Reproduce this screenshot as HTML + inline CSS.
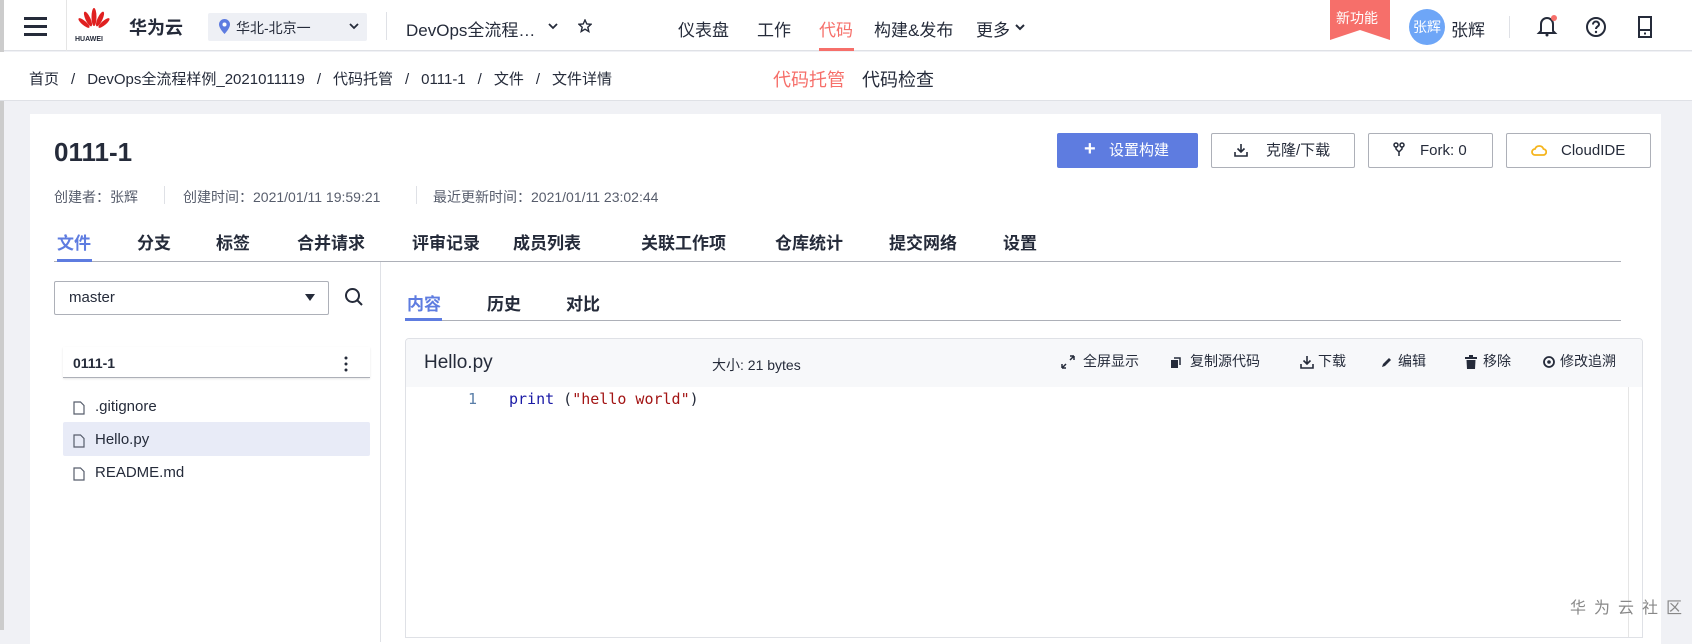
<!DOCTYPE html>
<html><head><meta charset="utf-8"><style>
*{margin:0;padding:0;box-sizing:border-box}
body{width:1692px;height:630px;overflow:hidden;background:#f0f1f5;font-family:"Liberation Sans","Noto Sans CJK SC",sans-serif;color:#252b3a;position:relative}
.a{position:absolute;white-space:nowrap}
svg{position:absolute}
.sep{margin:0 12px}
</style></head><body>
<!-- header -->
<div class="a" style="left:0;top:0;width:1692px;height:51px;background:#fff;border-bottom:1px solid #dfe1e6"></div>
<div class="a" style="left:0;top:0;width:4px;height:630px;background:#ccc"></div>
<div class="a" style="left:24px;top:17px;width:23px;height:3px;background:#252b3a;box-shadow:0 8px 0 #252b3a,0 16px 0 #252b3a"></div>
<div class="a" style="left:66px;top:0;width:1px;height:51px;background:#e5e5e5"></div>
<svg style="left:78px;top:8px" width="32" height="26" viewBox="0 0 32 26"><g fill="#e02020"><ellipse cx="16" cy="9" rx="2.5" ry="9"/><ellipse cx="10" cy="11" rx="2.5" ry="8" transform="rotate(-25 10 11)"/><ellipse cx="22" cy="11" rx="2.5" ry="8" transform="rotate(25 22 11)"/><ellipse cx="6" cy="15" rx="2.2" ry="7" transform="rotate(-50 6 15)"/><ellipse cx="26" cy="15" rx="2.2" ry="7" transform="rotate(50 26 15)"/></g></svg>
<div class="a" style="left:75px;top:36px;font-size:7px;font-weight:bold">HUAWEI</div>
<div class="a" style="left:129px;top:14px;font-size:18px;font-weight:bold">华为云</div>
<div class="a" style="left:208px;top:13px;width:159px;height:28px;background:#eef0f5;border-radius:2px"></div>
<svg style="left:219px;top:19px" width="11" height="15" viewBox="0 0 11 15"><path d="M5.5 0C2.5 0 0 2.4 0 5.4 0 9.5 5.5 15 5.5 15S11 9.5 11 5.4C11 2.4 8.5 0 5.5 0z" fill="#5e7ce0"/><circle cx="5.5" cy="5.5" r="2" fill="#fff"/></svg>
<div class="a" style="left:236px;top:18px;font-size:14px">华北-北京一</div>
<svg style="left:349px;top:23px" width="10" height="7" viewBox="0 0 10 7"><path d="M1 1L5 5 9 1" fill="none" stroke="#252b3a" stroke-width="1.8"/></svg>
<div class="a" style="left:386px;top:12px;width:1px;height:28px;background:#dfe1e6"></div>
<div class="a" style="left:406px;top:16px;font-size:17px">DevOps全流程…</div>
<svg style="left:548px;top:23px" width="10" height="7" viewBox="0 0 10 7"><path d="M1 1L5 5 9 1" fill="none" stroke="#252b3a" stroke-width="1.8"/></svg>
<svg style="left:578px;top:19px" width="14" height="14" viewBox="0 0 14 14"><path d="M7 1L8.8 5 13 5.3 9.8 8.2 10.8 12.5 7 10.2 3.2 12.5 4.2 8.2 1 5.3 5.2 5Z" fill="none" stroke="#252b3a" stroke-width="1.4"/></svg>
<div class="a" style="left:678px;top:16px;font-size:17px">仪表盘</div>
<div class="a" style="left:757px;top:16px;font-size:17px">工作</div>
<div class="a" style="left:819px;top:16px;font-size:17px;color:#f66f6a">代码</div>
<div class="a" style="left:819px;top:48px;width:35px;height:3px;background:#f66f6a"></div>
<div class="a" style="left:874px;top:16px;font-size:17px">构建&amp;发布</div>
<div class="a" style="left:976px;top:16px;font-size:17px">更多</div>
<svg style="left:1015px;top:24px" width="10" height="7" viewBox="0 0 10 7"><path d="M1 1L5 5 9 1" fill="none" stroke="#252b3a" stroke-width="2"/></svg>
<svg style="left:1330px;top:0" width="60" height="40" viewBox="0 0 60 40"><path d="M0 0H60V40L30 30 0 40Z" fill="#f66f6a"/></svg>
<div class="a" style="left:1336px;top:8px;font-size:14px;color:#fff">新功能</div>
<div class="a" style="left:1409px;top:9px;width:36px;height:36px;border-radius:50%;background:#6ea6f7;color:#fff;font-size:14px;line-height:36px;text-align:center">张辉</div>
<div class="a" style="left:1451px;top:16px;font-size:17px">张辉</div>
<div class="a" style="left:1509px;top:16px;width:1px;height:22px;background:#dfe1e6"></div>
<svg style="left:1536px;top:14px" width="22" height="24" viewBox="0 0 22 24"><path d="M5 17V10a6 6 0 0112 0v7l2 2H3z" fill="none" stroke="#252b3a" stroke-width="2"/><circle cx="11" cy="21" r="1.5" fill="#252b3a"/><circle cx="18" cy="4" r="3" fill="#f66f6a"/></svg>
<svg style="left:1585px;top:16px" width="22" height="22" viewBox="0 0 22 22"><circle cx="11" cy="11" r="9" fill="none" stroke="#252b3a" stroke-width="2"/><path d="M8 8.5a3 3 0 116 0c0 2-3 2-3 4.5" fill="none" stroke="#252b3a" stroke-width="2"/><circle cx="11" cy="16" r="1.2" fill="#252b3a"/></svg>
<svg style="left:1637px;top:15px" width="16" height="24" viewBox="0 0 16 24"><rect x="2" y="2" width="12" height="20" fill="none" stroke="#252b3a" stroke-width="2"/><path d="M2 15H14" stroke="#252b3a" stroke-width="2"/><rect x="7" y="17.5" width="2" height="2" fill="#252b3a"/></svg>
<!-- breadcrumb bar -->
<div class="a" style="left:0;top:52px;width:1692px;height:49px;background:#fff;border-bottom:1px solid #dfe1e6"></div>
<div class="a" style="left:29px;top:68px;font-size:15px">首页<span class="sep">/</span>DevOps全流程样例_2021011119<span class="sep">/</span>代码托管<span class="sep">/</span>0111-1<span class="sep">/</span>文件<span class="sep">/</span>文件详情</div>
<div class="a" style="left:773px;top:66px;font-size:18px;color:#f66f6a">代码托管</div>
<div class="a" style="left:862px;top:66px;font-size:18px">代码检查</div>
<!-- card -->
<div class="a" style="left:30px;top:114px;width:1631px;height:530px;background:#fff"></div>
<div class="a" style="left:54px;top:137px;font-size:26px;font-weight:bold">0111-1</div>
<div class="a" style="left:1057px;top:133px;width:141px;height:35px;background:#5e7ce0;border-radius:2px;color:#fff;font-size:15px;line-height:35px;padding-left:28px"><b style="font-size:20px;position:absolute;left:27px;top:-1px">+</b><span style="margin-left:24px">设置构建</span></div>
<div class="a" style="left:1211px;top:133px;width:144px;height:35px;border:1px solid #adb0b8;border-radius:2px;font-size:15px;line-height:33px;padding-left:54px">克隆/下载</div>
<svg style="left:1234px;top:143px" width="14" height="14" viewBox="0 0 14 14"><path d="M7 1V9M3.5 5.5L7 9 10.5 5.5M1 9V13H13V9" fill="none" stroke="#252b3a" stroke-width="1.6"/></svg>
<div class="a" style="left:1368px;top:133px;width:125px;height:35px;border:1px solid #adb0b8;border-radius:2px;font-size:15px;line-height:33px;padding-left:51px">Fork: 0</div>
<svg style="left:1393px;top:142px" width="12" height="16" viewBox="0 0 12 16"><circle cx="3" cy="3" r="2" fill="none" stroke="#252b3a" stroke-width="1.5"/><circle cx="9" cy="3" r="2" fill="none" stroke="#252b3a" stroke-width="1.5"/><path d="M3 5V7L6 10 9 7V5M6 10V14" fill="none" stroke="#252b3a" stroke-width="1.5"/></svg>
<div class="a" style="left:1506px;top:133px;width:145px;height:35px;border:1px solid #adb0b8;border-radius:2px;font-size:15px;line-height:33px;padding-left:54px">CloudIDE</div>
<svg style="left:1531px;top:143px" width="16" height="14" viewBox="0 0 16 14"><path d="M4 12a3 3 0 010-6 4.5 4.5 0 018.5 0 3 3 0 01-.5 6z" fill="none" stroke="#f5b51e" stroke-width="1.8"/></svg>
<div class="a" style="left:54px;top:187px;font-size:14px;color:#575d6c">创建者：张辉</div>
<div class="a" style="left:164px;top:186px;width:1px;height:18px;background:#dfe1e6"></div>
<div class="a" style="left:183px;top:187px;font-size:14px;color:#575d6c">创建时间：2021/01/11 19:59:21</div>
<div class="a" style="left:416px;top:186px;width:1px;height:18px;background:#dfe1e6"></div>
<div class="a" style="left:433px;top:187px;font-size:14px;color:#575d6c">最近更新时间：2021/01/11 23:02:44</div>
<!-- tabs -->
<div class="a" style="top:229px;left:0;font-size:17px;font-weight:bold">
<span class="a" style="left:57px;color:#5e7ce0">文件</span><span class="a" style="left:137px">分支</span><span class="a" style="left:216px">标签</span><span class="a" style="left:297px">合并请求</span><span class="a" style="left:412px">评审记录</span><span class="a" style="left:513px">成员列表</span><span class="a" style="left:641px">关联工作项</span><span class="a" style="left:775px">仓库统计</span><span class="a" style="left:889px">提交网络</span><span class="a" style="left:1003px">设置</span></div>
<div class="a" style="left:54px;top:261px;width:1567px;height:1px;background:#adb0b8"></div>
<div class="a" style="left:57px;top:259px;width:35px;height:3px;background:#5e7ce0"></div>
<div class="a" style="left:380px;top:262px;width:1px;height:380px;background:#dfe1e6"></div>
<!-- left panel -->
<div class="a" style="left:54px;top:281px;width:275px;height:34px;border:1px solid #adb0b8;border-radius:2px;font-size:15px;line-height:32px;padding-left:14px">master</div>
<svg style="left:305px;top:294px" width="10" height="7" viewBox="0 0 10 7"><path d="M0 0H10L5 7Z" fill="#252b3a"/></svg>
<svg style="left:344px;top:287px" width="20" height="20" viewBox="0 0 20 20"><circle cx="8.5" cy="8.5" r="6.5" fill="none" stroke="#252b3a" stroke-width="2"/><path d="M13.5 13.5L18 18" stroke="#252b3a" stroke-width="2"/></svg>
<div class="a" style="left:63px;top:347px;width:307px;height:31px;border-bottom:1px solid #adb0b8;box-shadow:0 1px 2px rgba(0,0,0,.1)"></div>
<div class="a" style="left:73px;top:355px;font-size:14px;font-weight:bold">0111-1</div>
<svg style="left:344px;top:356px" width="4" height="16" viewBox="0 0 4 16"><circle cx="2" cy="2" r="1.5" fill="#252b3a"/><circle cx="2" cy="8" r="1.5" fill="#252b3a"/><circle cx="2" cy="14" r="1.5" fill="#252b3a"/></svg>
<div class="a" style="left:63px;top:422px;width:307px;height:34px;background:#e8ebf7;border-radius:2px"></div>
<div class="a" style="left:95px;top:398px;font-size:15px;color:#252b3a">.gitignore</div>
<div class="a" style="left:95px;top:431px;font-size:15px">Hello.py</div>
<div class="a" style="left:95px;top:464px;font-size:15px">README.md</div>
<svg style="left:73px;top:401px" width="12" height="14" viewBox="0 0 12 14"><path d="M1 1H7.5L11 4.5V13H1Z" fill="none" stroke="#575d6c" stroke-width="1.2"/></svg>
<svg style="left:73px;top:434px" width="12" height="14" viewBox="0 0 12 14"><path d="M1 1H7.5L11 4.5V13H1Z" fill="none" stroke="#575d6c" stroke-width="1.2"/></svg>
<svg style="left:73px;top:467px" width="12" height="14" viewBox="0 0 12 14"><path d="M1 1H7.5L11 4.5V13H1Z" fill="none" stroke="#575d6c" stroke-width="1.2"/></svg>
<!-- right tabs -->
<div class="a" style="left:407px;top:290px;font-size:17px;font-weight:bold;color:#5e7ce0">内容</div>
<div class="a" style="left:487px;top:290px;font-size:17px;font-weight:bold">历史</div>
<div class="a" style="left:566px;top:290px;font-size:17px;font-weight:bold">对比</div>
<div class="a" style="left:405px;top:320px;width:1216px;height:1px;background:#adb0b8"></div>
<div class="a" style="left:405px;top:318px;width:37px;height:3px;background:#5e7ce0"></div>
<!-- code panel -->
<div class="a" style="left:405px;top:338px;width:1238px;height:300px;border:1px solid #dfe1e6;border-radius:4px 4px 0 0;background:#fff"></div>
<div class="a" style="left:406px;top:339px;width:1236px;height:48px;background:#f7f8fa;border-radius:4px 4px 0 0"></div>
<div class="a" style="left:424px;top:352px;font-size:19px">Hello.py</div>
<div class="a" style="left:712px;top:355px;font-size:14px">大小: 21 bytes</div>
<div class="a" style="left:1083px;top:351px;font-size:14px">全屏显示</div>
<div class="a" style="left:1190px;top:351px;font-size:14px">复制源代码</div>
<div class="a" style="left:1318px;top:351px;font-size:14px">下载</div>
<div class="a" style="left:1398px;top:351px;font-size:14px">编辑</div>
<div class="a" style="left:1483px;top:351px;font-size:14px">移除</div>
<div class="a" style="left:1560px;top:351px;font-size:14px">修改追溯</div>
<svg style="left:1061px;top:355px" width="14" height="14" viewBox="0 0 14 14"><path d="M1 13L5 9M1 13V9M1 13H5M13 1L9 5M13 1V5M13 1H9" fill="none" stroke="#252b3a" stroke-width="1.5"/></svg>
<svg style="left:1170px;top:356px" width="12" height="12" viewBox="0 0 12 12"><rect x="1" y="4" width="7" height="8" fill="#252b3a"/><path d="M4 2H10V9" fill="none" stroke="#252b3a" stroke-width="1.5"/></svg>
<svg style="left:1300px;top:355px" width="14" height="14" viewBox="0 0 14 14"><path d="M7 1V9M3.5 5.5L7 9 10.5 5.5M1 9V13H13V9" fill="none" stroke="#252b3a" stroke-width="1.6"/></svg>
<svg style="left:1381px;top:356px" width="12" height="12" viewBox="0 0 12 12"><path d="M1 11L2 8 8 2 10 4 4 10Z" fill="#252b3a"/></svg>
<svg style="left:1465px;top:355px" width="12" height="14" viewBox="0 0 12 14"><rect x="0" y="2" width="12" height="2" fill="#252b3a"/><rect x="4" y="0" width="4" height="2" fill="#252b3a"/><path d="M1.5 5H10.5L10 14H2Z" fill="#252b3a"/></svg>
<svg style="left:1542px;top:356px" width="14" height="12" viewBox="0 0 14 12"><circle cx="7" cy="6" r="5" fill="none" stroke="#252b3a" stroke-width="1.8"/><circle cx="7" cy="6" r="1.8" fill="#252b3a"/></svg>
<div class="a" style="left:1628px;top:387px;width:1px;height:250px;background:#e5e5e5"></div>
<div class="a" style="left:468px;top:390px;font-family:'DejaVu Sans Mono',monospace;font-size:15px;color:#5a7ea8">1</div>
<div class="a" style="left:509px;top:390px;font-family:'DejaVu Sans Mono',monospace;font-size:15px;color:#252b3a"><span style="color:#1a1aa6">print</span> (<span style="color:#a31515">"hello world"</span>)</div>
<div class="a" style="left:1570px;top:594px;font-size:16px;color:#888;letter-spacing:8px">华为云社区</div>
</body></html>
